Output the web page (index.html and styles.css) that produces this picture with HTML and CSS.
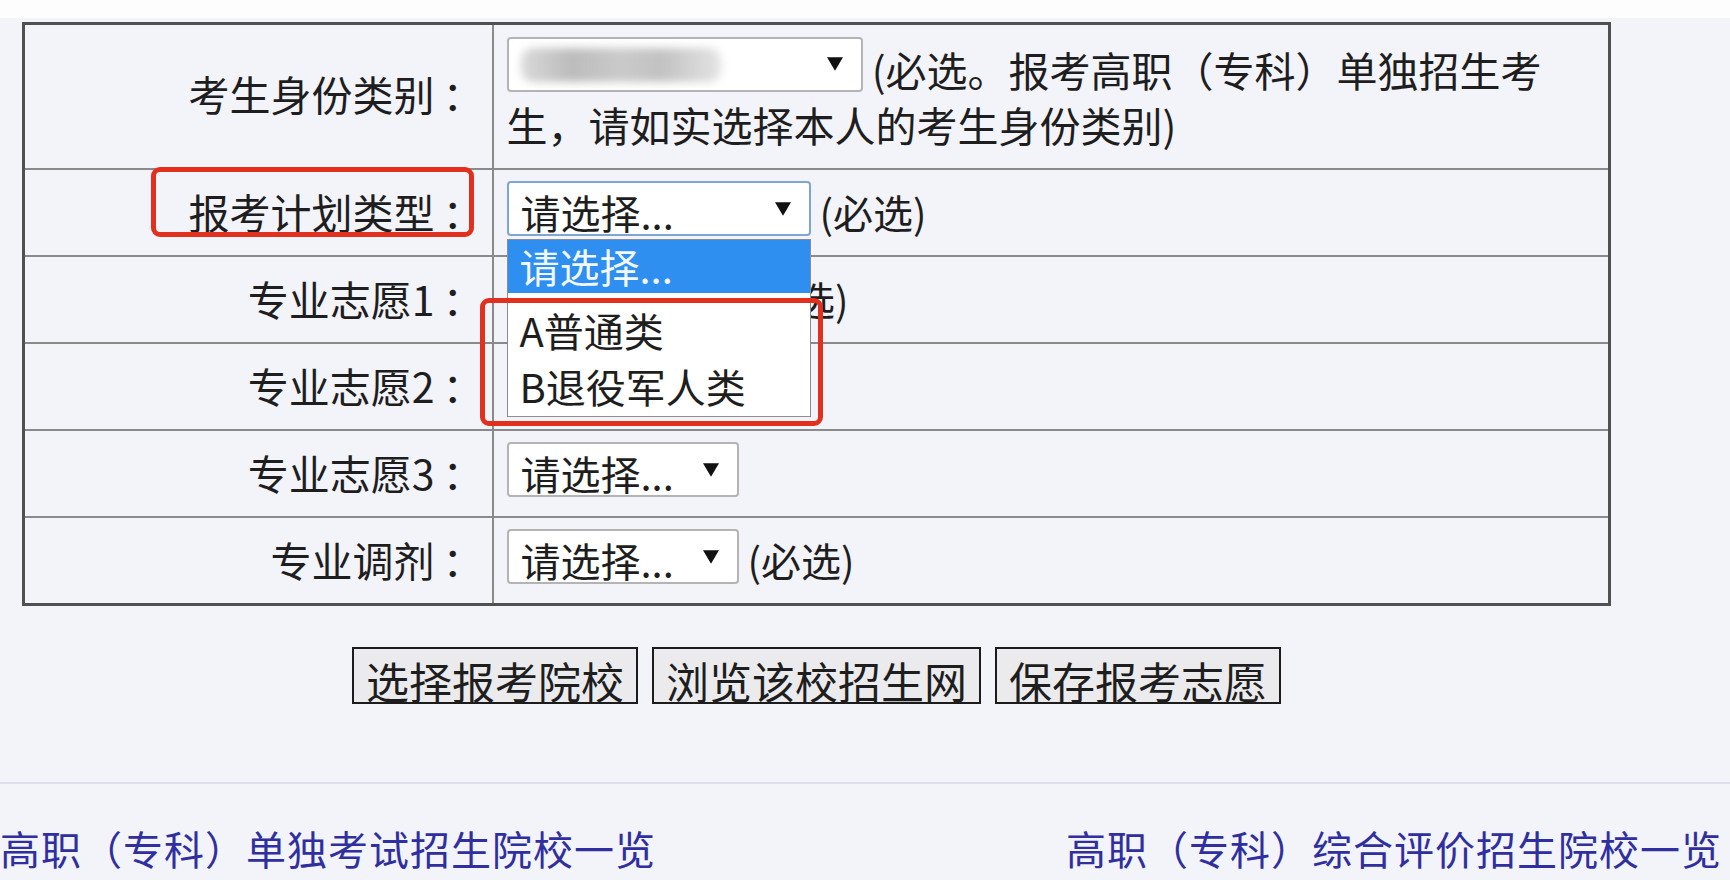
FILE: index.html
```html
<!DOCTYPE html>
<html lang="zh-CN">
<head>
    <meta charset="UTF-8">
    <meta name="viewport" content="width=device-width, initial-scale=1.0">
    <title>填报志愿</title>
    <link rel="stylesheet" href="styles.css">
</head>
<body>
<div class="page">
    <table class="form-table">
        <colgroup>
            <col class="col-label">
            <col>
        </colgroup>
        <tr class="row-tall">
            <td class="label">考生身份类别<span class="colon">：</span></td>
            <td class="field note">
                <span class="select select-wide"><span class="blur"></span><svg class="arrow" viewBox="0 0 14 12"><polygon points="0,0 14,0 7,12"/></svg></span>
                (必选。报考高职（专科）单独招生考生，请如实选择本人的考生身份类别)
            </td>
        </tr>
        <tr>
            <td class="label marked">报考计划类型<span class="colon">：</span><span class="mark mark-label"></span></td>
            <td class="field">
                <span class="select select-mid select-focus"><span class="select-text">请选择...</span><svg class="arrow" viewBox="0 0 14 12"><polygon points="0,0 14,0 7,12"/></svg>
                    <span class="menu">
                        <span class="opt opt-active">请选择...</span>
                        <span class="opt-group">
                            <span class="opt">A普通类</span>
                            <span class="opt">B退役军人类</span>
                        </span>
                        <span class="mark mark-menu"></span>
                    </span>
                </span>
                (必选)
            </td>
        </tr>
        <tr>
            <td class="label">专业志愿1<span class="colon">：</span></td>
            <td class="field">
                <span class="select select-narrow"><span class="select-text">请选择...</span><svg class="arrow" viewBox="0 0 14 12"><polygon points="0,0 14,0 7,12"/></svg></span>
                (必选)
            </td>
        </tr>
        <tr>
            <td class="label">专业志愿2<span class="colon">：</span></td>
            <td class="field">
                <span class="select"><span class="select-text">请选择...</span><svg class="arrow" viewBox="0 0 14 12"><polygon points="0,0 14,0 7,12"/></svg></span>
            </td>
        </tr>
        <tr>
            <td class="label">专业志愿3<span class="colon">：</span></td>
            <td class="field">
                <span class="select"><span class="select-text">请选择...</span><svg class="arrow" viewBox="0 0 14 12"><polygon points="0,0 14,0 7,12"/></svg></span>
            </td>
        </tr>
        <tr>
            <td class="label">专业调剂<span class="colon">：</span></td>
            <td class="field">
                <span class="select"><span class="select-text">请选择...</span><svg class="arrow" viewBox="0 0 14 12"><polygon points="0,0 14,0 7,12"/></svg></span>
                (必选)
            </td>
        </tr>
    </table>

    <div class="actions">
        <button class="btn" type="button">选择报考院校</button>
        <button class="btn" type="button">浏览该校招生网</button>
        <button class="btn" type="button">保存报考志愿</button>
    </div>

    <div class="links">
        <a href="#">高职（专科）单独考试招生院校一览</a>
        <a href="#">高职（专科）综合评价招生院校一览</a>
    </div>
</div>
</body>
</html>
```

FILE: styles.css
```css
body {
    margin: 0;
    background: #fdfdfe;
    font-family: "Noto Sans CJK SC", "Microsoft YaHei", sans-serif;
    font-size: 40px;
    color: #1e1e1e;
}

.page {
    margin-top: 18px;
    padding-top: 4px;
    height: 858px;
    background: #f3f3fa;
    overflow: hidden;
}

.form-table {
    margin-left: 22px;
    width: 1589px;
    border-collapse: collapse;
    border: 3px solid #505050;
    table-layout: fixed;
}

.col-label {
    width: 469px;
}

.form-table td {
    border: 2px solid #8a8a8a;
    padding: 0;
    height: 85px;
    vertical-align: middle;
}

.form-table .row-tall td {
    height: 143px;
}

.form-table .label {
    height: 81px;
    padding: 0 8px 4px 0;
    font-size: 41px;
    text-align: right;
    white-space: nowrap;
}

.form-table .row-tall .label {
    height: 135px;
    padding-bottom: 8px;
}

.colon {
    margin-left: 8px;
    font-family: "Noto Sans CJK TC", "Noto Sans CJK SC", sans-serif;
}

.marked {
    position: relative;
}

.form-table .field {
    padding: 0 40px 0 13px;
    line-height: 55px;
}

.note {
    font-size: 41px;
}

.select {
    display: inline-flex;
    align-items: center;
    justify-content: space-between;
    vertical-align: top;
    position: relative;
    box-sizing: border-box;
    width: 232px;
    height: 55px;
    margin-top: -4px;
    padding: 0 18px 0 12px;
    background: #fff;
    border: 2px solid #b4b4b4;
    border-radius: 4px;
    font-size: 40px;
    line-height: 46px;
}

.select-wide {
    width: 356px;
    margin-top: -5px;
}

.select-mid {
    width: 304px;
}

.select-narrow {
    width: 226px;
}

.select-focus {
    border-color: #7fa5d4;
}

.select-text {
    padding-top: 6px;
}

.arrow {
    width: 16px;
    height: 14px;
    fill: #111;
    flex-shrink: 0;
}

.blur {
    width: 200px;
    height: 34px;
    margin-top: 2px;
    border-radius: 12px;
    background: linear-gradient(90deg, #dadada, #bcbcbc 25%, #cacaca 50%, #c2c2c2 70%, #e4e4e4);
    filter: blur(4px);
}

.menu {
    position: absolute;
    top: 56px;
    left: -2px;
    width: 304px;
    box-sizing: border-box;
    border: 1px solid #8c8c8c;
    background: #fff;
    z-index: 2;
}

.opt {
    display: block;
    height: 56px;
    padding-left: 12px;
    line-height: 56px;
}

.opt-active {
    height: 53px;
    line-height: 53px;
    background: #2f8ff0;
    color: #f2f8ff;
}

.opt-group {
    display: block;
    padding: 9px 0 2px;
}

.mark {
    position: absolute;
    box-sizing: border-box;
    border: 5px solid #e2301f;
    border-radius: 9px;
}

.mark-label {
    left: 126px;
    top: -3px;
    width: 323px;
    height: 70px;
}

.mark-menu {
    left: -28px;
    top: 58px;
    width: 343px;
    height: 128px;
    z-index: 3;
}

.actions {
    display: flex;
    justify-content: center;
    gap: 14px;
    width: 1589px;
    margin: 41px 0 0 22px;
}

.btn {
    box-sizing: border-box;
    height: 57px;
    padding: 9px 12px 0;
    border: 2px solid #1c1c1c;
    border-radius: 0;
    background: #ebebee;
    color: #1e1e1e;
    font-family: inherit;
    font-size: 43px;
    line-height: 43px;
    overflow: hidden;
}

.links {
    display: flex;
    justify-content: space-between;
    margin-top: 78px;
    padding: 35px 8px 0 0;
    border-top: 2px solid #dedeef;
    line-height: 58px;
}

.links a {
    color: #2f2f9f;
    text-decoration: none;
    letter-spacing: 1px;
}
```
